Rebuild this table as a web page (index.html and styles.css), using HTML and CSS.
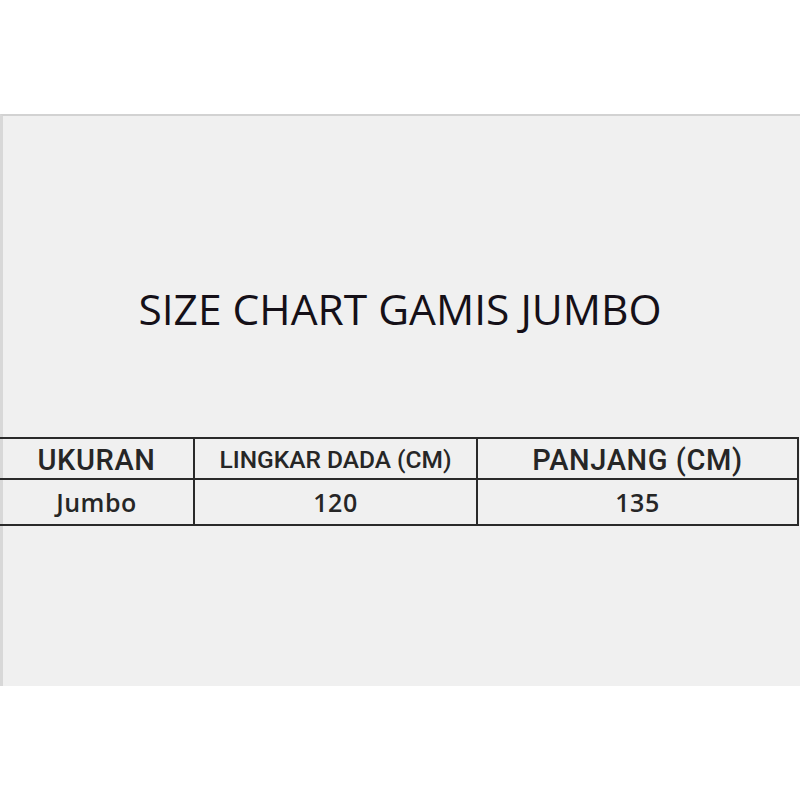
FILE: index.html
```html
<!DOCTYPE html>
<html>
<head>
<meta charset="utf-8">
<link rel="stylesheet" href="styles.css">
</head>
<body>
<div class="page">
  <div class="panel">
    <h1 class="title">SIZE CHART GAMIS JUMBO</h1>
    <div class="chart">
      <div class="cell head big">UKURAN</div>
      <div class="cell head small sep">LINGKAR DADA (CM)</div>
      <div class="cell head big sep">PANJANG (CM)</div>
      <div class="cell body">Jumbo</div>
      <div class="cell body sep">120</div>
      <div class="cell body sep">135</div>
    </div>
  </div>
</div>
</body>
</html>
```
FILE: styles.css
```css
html, body {
  margin: 0;
  padding: 0;
  background: #ffffff;
}
.page {
  width: 800px;
  height: 800px;
  padding-top: 114px;
  box-sizing: border-box;
}
.panel {
  height: 572px;
  box-sizing: border-box;
  background: #f0f0f0;
  border-top: 2px solid #d2d2d2;
  border-left: 3px solid #d8d8d8;
  display: flex;
  flex-direction: column;
}
.title {
  margin: 0;
  padding-top: 171px;
  height: 44px;
  font-family: "Open Sans", sans-serif;
  font-weight: 400;
  font-size: 42.5px;
  line-height: 44px;
  color: #151018;
  text-align: center;
  letter-spacing: 0;
  padding-right: 3px;
}
.chart {
  margin-top: 106px;
  margin-left: -3px;
  width: 799px;
  box-sizing: border-box;
  display: grid;
  grid-template-columns: 193px 283px 1fr;
  grid-template-rows: 41px 46px;
  border-top: 2px solid #2a2a2a;
  border-right: 2px solid #2a2a2a;
}
.cell {
  display: flex;
  align-items: center;
  justify-content: center;
  border-bottom: 2px solid #2a2a2a;
  color: #262626;
  font-family: "Roboto", sans-serif;
}
.sep {
  border-left: 2px solid #2a2a2a;
}
.head.big {
  font-size: 29px;
  font-weight: 500;
  letter-spacing: 0.6px;
  padding-top: 2px;
}
.head.small {
  font-size: 24.5px;
  font-weight: 500;
  padding-top: 2px;
}
.body {
  font-family: "Open Sans", sans-serif;
  font-size: 25px;
  font-weight: 600;
  letter-spacing: 0.5px;
}
```
